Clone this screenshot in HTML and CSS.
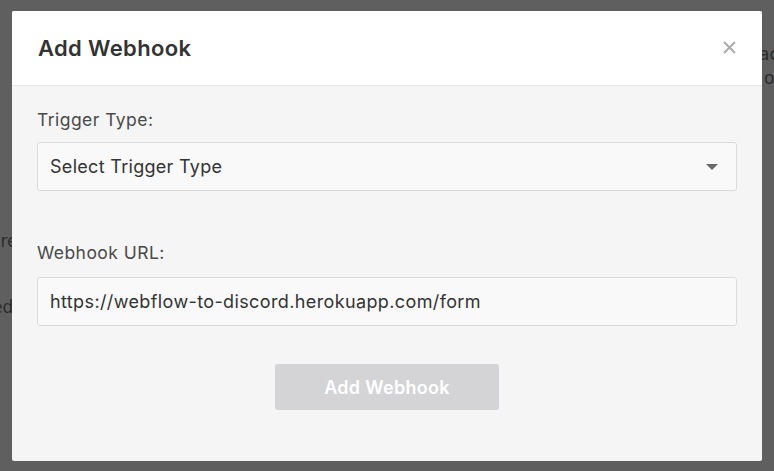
FILE: index.html
```html
<!DOCTYPE html>
<html>
<head>
<meta charset="utf-8">
<link rel="stylesheet" href="styles.css">
</head>
<body>
<div class="page">
  <span class="bg-text bg-r1">ad</span>
  <span class="bg-text bg-r2">o</span>
  <span class="bg-text bg-l1">ere</span>
  <span class="bg-text bg-l2">ed</span>
</div>
<div class="overlay">
  <div class="modal">
    <div class="modal-header">
      <h2 class="modal-title">Add Webhook</h2>
      <button class="close" aria-label="Close">
        <svg width="13" height="13" viewBox="0 0 13 13"><path d="M1 1L12 12M12 1L1 12" stroke="#ababab" stroke-width="2"/></svg>
      </button>
    </div>
    <div class="modal-body">
      <label class="label">Trigger Type:</label>
      <div class="select">
        <span>Select Trigger Type</span>
        <svg class="caret" width="12" height="6" viewBox="0 0 12 6"><path d="M0 0H12L6 6Z" fill="#6a6a6a"/></svg>
      </div>
      <label class="label label-url">Webhook URL:</label>
      <div class="input">https://webflow-to-discord.herokuapp.com/form</div>
      <div class="actions">
        <button class="btn">Add Webhook</button>
      </div>
    </div>
  </div>
</div>
</body>
</html>
```
FILE: styles.css
```css
html, body {
  margin: 0;
  padding: 0;
  width: 774px;
  height: 471px;
  overflow: hidden;
}
body {
  background: #5f5f5f;
  font-family: Inter, "Noto Sans", sans-serif;
  position: relative;
}
.page {
  position: absolute;
  inset: 0;
}
.bg-text {
  position: absolute;
  font-family: "DejaVu Sans", sans-serif;
  font-size: 17px;
  color: #2c2c2c;
}
.bg-r1 { left: 759px; top: 44px; }
.bg-r2 { left: 764px; top: 68px; }
.bg-l1 { left: -10px; top: 231px; }
.bg-l2 { left: -8px; top: 297px; }
.overlay {
  position: absolute;
  inset: 0;
  padding: 11px 12px 10px;
  box-sizing: border-box;
}
.modal {
  width: 750px;
  height: 450px;
  background: #f5f5f5;
  border-radius: 2px;
  display: flex;
  flex-direction: column;
  overflow: hidden;
}
.modal-header {
  height: 75px;
  background: #fff;
  border-bottom: 1px solid #e6e6e6;
  display: flex;
  align-items: center;
  justify-content: space-between;
  padding: 0 26px 0 26px;
  box-sizing: border-box;
  flex-shrink: 0;
}
.modal-title {
  margin: 0;
  font-size: 22px;
  font-weight: 600;
  color: #333;
  letter-spacing: 0.35px;
}
.close {
  border: 0;
  background: none;
  padding: 0;
  width: 13px;
  height: 13px;
  display: flex;
  position: relative;
  top: -1px;
}
.modal-body {
  padding: 23px 25px 0 25px;
  display: flex;
  flex-direction: column;
}
.label {
  display: block;
  font-size: 17.5px;
  line-height: 22px;
  color: #4a4a4a;
  letter-spacing: 0.45px;
  margin-bottom: 11px;
}
.label-url {
  margin-top: 51px;
  margin-bottom: 13px;
}
.select, .input {
  height: 49px;
  box-sizing: border-box;
  border: 1px solid #dadada;
  border-radius: 3px;
  background: #f9f9f9;
  display: flex;
  align-items: center;
  justify-content: space-between;
  padding: 0 18px 0 12px;
  font-size: 18px;
  letter-spacing: 0.3px;
  color: #333;
}
.input {
  letter-spacing: 0.38px;
}
.caret {
  display: block;
}
.actions {
  display: flex;
  justify-content: center;
  margin-top: 38px;
}
.btn {
  width: 224px;
  height: 46px;
  border: 0;
  border-radius: 3px;
  background: #d4d4d6;
  color: #fff;
  font-family: Inter, "Noto Sans", sans-serif;
  font-size: 18px;
  letter-spacing: 0.3px;
  font-weight: 600;
}
```
